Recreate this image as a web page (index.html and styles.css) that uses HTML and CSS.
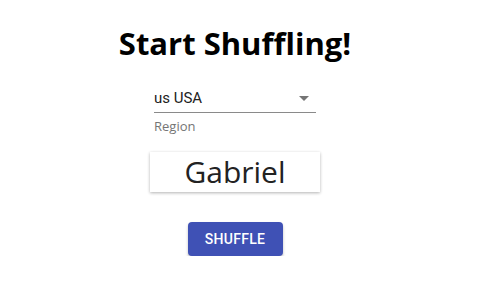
FILE: index.html
```html
<!DOCTYPE html>
<html lang="en">
<head>
    <meta charset="UTF-8">
    <meta name="viewport" content="width=device-width, initial-scale=1.0">
    <title>Start Shuffling!</title>
    <link rel="stylesheet" href="styles.css">
</head>
<body>
    <div class="container">
        <h1>Start Shuffling!</h1>
        <div class="field">
            <div class="select">
                <span class="select-value">us USA</span>
                <span class="arrow"></span>
            </div>
            <div class="helper">Region</div>
        </div>
        <div class="name-card">Gabriel</div>
        <div class="button">Shuffle</div>
    </div>
</body>
</html>
```

FILE: styles.css
```css
/* General Styles */
body {
    font-family: "Open Sans", sans-serif;
    background-color: #FFFFFF;
    margin: 0;
    padding: 0;
}
.container {
    width: 470px;
    display: flex;
    flex-direction: column;
    align-items: center;
}
h1 {
    font-size: 31px;
    font-weight: 700;
    color: #000000;
    margin: 21px 0 0 0;
    line-height: 44px;
}
.field {
    width: 162px;
    margin-top: 19px;
}
.select {
    display: flex;
    justify-content: space-between;
    align-items: center;
    height: 28px;
    border-bottom: 1px solid #8a8a8a;
    font-family: Roboto, sans-serif;
    font-size: 15px;
    color: #222222;
}
.arrow {
    width: 0;
    height: 0;
    margin-right: 7px;
    border-left: 5px solid transparent;
    border-right: 5px solid transparent;
    border-top: 5px solid #757575;
}
.helper {
    margin-top: 4px;
    font-family: "Open Sans", sans-serif;
    font-size: 13px;
    color: #757575;
}
.name-card {
    width: 170px;
    height: 40px;
    margin-top: 17px;
    text-align: center;
    font-size: 30px;
    line-height: 40px;
    color: #222222;
    background-color: #FFFFFF;
    box-shadow: 0 1px 3px rgba(0, 0, 0, 0.3);
}
.button {
    width: 95px;
    height: 34px;
    margin-top: 30px;
    line-height: 34px;
    text-align: center;
    font-family: Roboto, sans-serif;
    font-size: 14px;
    font-weight: 500;
    letter-spacing: 0.3px;
    text-transform: uppercase;
    color: #FFFFFF;
    background-color: #3F51B5;
    border-radius: 4px;
    box-shadow: 0 2px 3px rgba(0, 0, 0, 0.25);
}
```
